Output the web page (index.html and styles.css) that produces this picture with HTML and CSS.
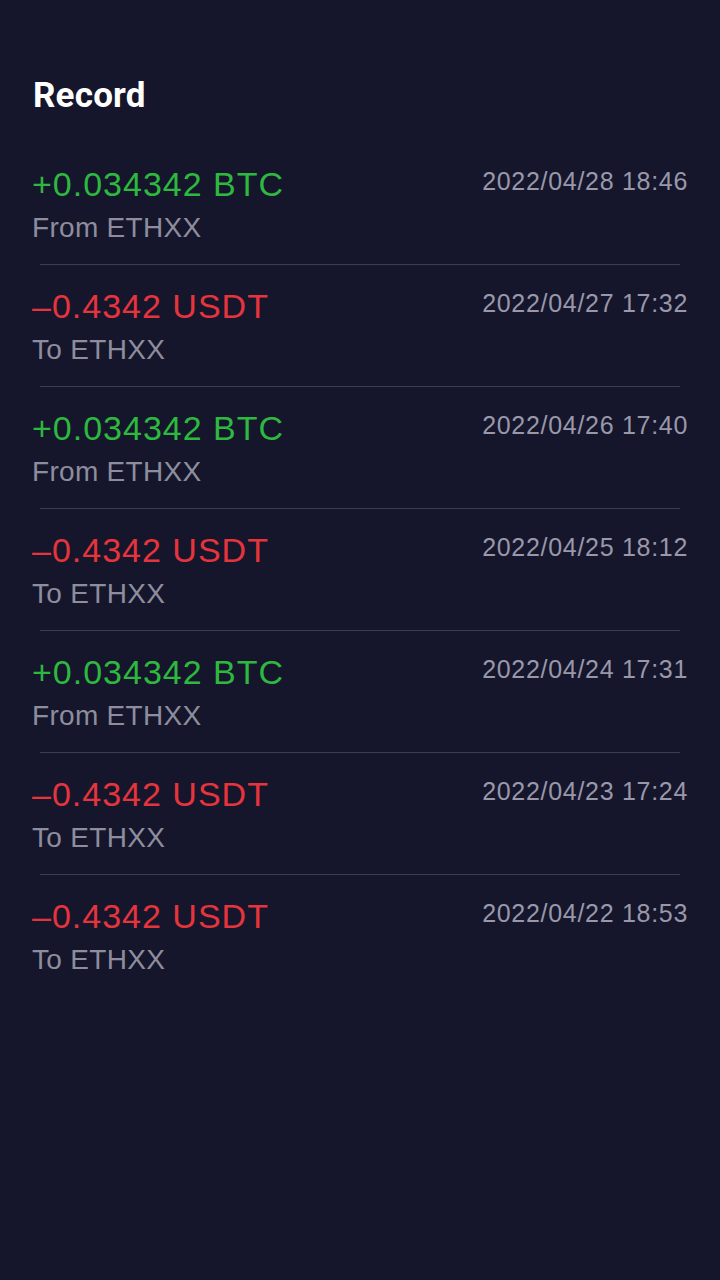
FILE: index.html
```html
<!DOCTYPE html>
<html lang="en">
<head>
<meta charset="utf-8">
<title>Record</title>
<link rel="stylesheet" href="styles.css">
</head>
<body>
<main class="page">
  <h1 class="title">Record</h1>
  <ul class="list">
    <li class="item"><div class="row"><div class="info"><div class="amount plus">+0.034342 BTC</div><div class="party">From ETHXX</div></div><div class="date">2022/04/28 18:46</div></div></li>
    <li class="item"><div class="row"><div class="info"><div class="amount minus">–0.4342 USDT</div><div class="party">To ETHXX</div></div><div class="date">2022/04/27 17:32</div></div></li>
    <li class="item"><div class="row"><div class="info"><div class="amount plus">+0.034342 BTC</div><div class="party">From ETHXX</div></div><div class="date">2022/04/26 17:40</div></div></li>
    <li class="item"><div class="row"><div class="info"><div class="amount minus">–0.4342 USDT</div><div class="party">To ETHXX</div></div><div class="date">2022/04/25 18:12</div></div></li>
    <li class="item"><div class="row"><div class="info"><div class="amount plus">+0.034342 BTC</div><div class="party">From ETHXX</div></div><div class="date">2022/04/24 17:31</div></div></li>
    <li class="item"><div class="row"><div class="info"><div class="amount minus">–0.4342 USDT</div><div class="party">To ETHXX</div></div><div class="date">2022/04/23 17:24</div></div></li>
    <li class="item last"><div class="row"><div class="info"><div class="amount minus">–0.4342 USDT</div><div class="party">To ETHXX</div></div><div class="date">2022/04/22 18:53</div></div></li>
  </ul>
</main>
</body>
</html>
```

FILE: styles.css
```css
html, body {
  margin: 0;
  padding: 0;
  background: #15162b;
}
body {
  font-family: "Liberation Sans", Arial, sans-serif;
  min-height: 1280px;
}
.page {
  padding-top: 75px;
}
.title {
  margin: 0 0 26px 33px;
  font-family: Roboto, "Liberation Sans", sans-serif;
  font-weight: 700;
  font-size: 35px;
  line-height: 42px;
  letter-spacing: 0.2px;
  color: #ffffff;
}
.list {
  list-style: none;
  margin: 0;
  padding: 0;
}
.item {
  margin: 0 40px;
  padding: 21px 0 18px;
  border-bottom: 1px solid #3b3c52;
}
.item.last {
  border-bottom-color: transparent;
}
.row {
  display: flex;
  justify-content: space-between;
  align-items: flex-start;
  margin: 0 -8px;
}
.info {
  display: flex;
  flex-direction: column;
  gap: 6px;
}
.amount {
  font-size: 34px;
  line-height: 40px;
  letter-spacing: 1px;
}
.plus { color: #2eb83f; }
.minus { color: #e6343d; }
.party {
  font-size: 28px;
  line-height: 36px;
  letter-spacing: 0.3px;
  color: #8e8d9e;
}
.date {
  margin-top: 1px;
  font-size: 25px;
  line-height: 32px;
  letter-spacing: 0.7px;
  color: #9998aa;
}
```
